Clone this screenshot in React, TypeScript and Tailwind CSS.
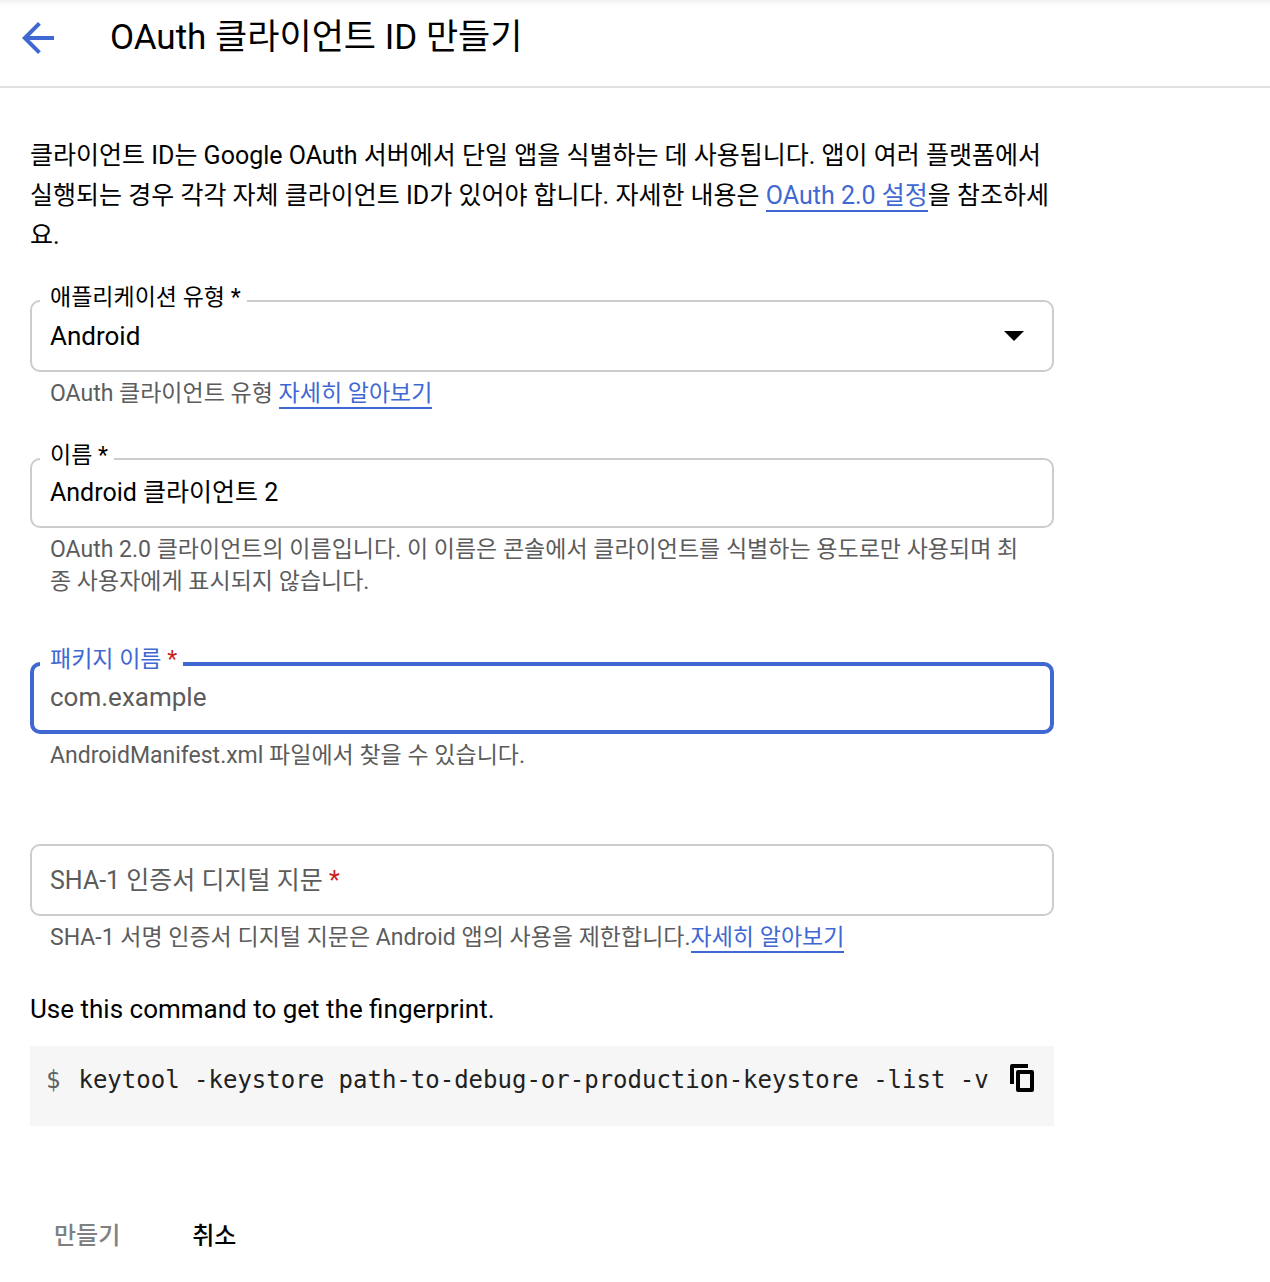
import React, { useState } from 'react';
import { MdArrowBack } from 'react-icons/md';
import clsx from 'clsx';

const COMMAND = 'keytool -keystore path-to-debug-or-production-keystore -list -v';

const TextLink = ({ children }: { children: React.ReactNode }) => (
  <a href="#" className="border-b-2 border-[#3f68d3] text-[#3f68d3]">
    {children}
  </a>
);

type FieldProps = {
  id: string;
  label: string;
  active?: boolean;
  empty?: boolean;
  hint: React.ReactNode;
  className?: string;
  children: React.ReactNode;
};

const Field = ({ id, label, active, empty, hint, className, children }: FieldProps) => (
  <div className={className}>
    <div className="relative">
      {children}
      <label
        htmlFor={id}
        className={clsx(
          'absolute',
          empty
            ? 'left-5 top-[17px] text-[25px] leading-10 text-[#5c5c5c]'
            : 'left-[10px] -top-[14px] bg-white pl-[10px] pr-[6px] text-[23px] leading-6',
          active && 'text-[#3f68d3]'
        )}
      >
        {label} <span className={clsx((active || empty) && 'text-[#c5221f]')}>*</span>
      </label>
    </div>
    <p className="mt-[6px] pl-5 pr-8 text-[23px] leading-8 text-[#5c5c5c]">{hint}</p>
  </div>
);

const box = 'block w-full rounded-[10px] bg-white outline-none';
const idle = 'border-2 border-[#cccccc] px-[18px]';

export default function App() {
  const [type, setType] = useState('android');
  const [name, setName] = useState('Android 클라이언트 2');
  const [packageName, setPackageName] = useState('');
  const [fingerprint, setFingerprint] = useState('');

  return (
    <div
      lang="ko"
      className="bg-white font-[Roboto,'Noto_Sans_CJK_KR',sans-serif] text-[25px] text-black"
    >
      {/* Header */}
      <header className="flex h-[88px] items-center border-b-2 border-[#e0e0e0] bg-linear-to-b from-[#f1f1f1] to-white to-[6px] pb-[10px] pl-[14px]">
        <button type="button" aria-label="뒤로" className="text-[#3f68d3]">
          <MdArrowBack className="size-12" />
        </button>
        <h1 className="ml-12 text-[35px] leading-10">OAuth 클라이언트 ID 만들기</h1>
      </header>

      <form className="mx-[30px] max-w-[1024px] pt-12 pb-[10px]" onSubmit={(e) => e.preventDefault()}>
        <p className="leading-10">
          클라이언트 ID는 Google OAuth 서버에서 단일 앱을 식별하는 데 사용됩니다. 앱이 여러 플랫폼에서
          실행되는 경우 각각 자체 클라이언트 ID가 있어야 합니다. 자세한 내용은{' '}
          <TextLink>OAuth 2.0 설정</TextLink>을 참조하세요.
        </p>

        {/* Application type */}
        <Field
          id="type"
          label="애플리케이션 유형"
          className="mt-11"
          hint={
            <>
              OAuth 클라이언트 유형 <TextLink>자세히 알아보기</TextLink>
            </>
          }
        >
          <select
            id="type"
            value={type}
            onChange={(e) => setType(e.target.value)}
            className={clsx(box, idle, 'h-[72px] appearance-none text-[26px]')}
          >
            <option value="android">Android</option>
          </select>
          <svg
            viewBox="0 0 20 10"
            className="pointer-events-none absolute right-[30px] top-[31px] h-[10px] w-5"
          >
            <path d="M0 0h20L10 10z" />
          </svg>
        </Field>

        {/* Name */}
        <Field
          id="name"
          label="이름"
          className="mt-12"
          hint="OAuth 2.0 클라이언트의 이름입니다. 이 이름은 콘솔에서 클라이언트를 식별하는 용도로만 사용되며 최종 사용자에게 표시되지 않습니다."
        >
          <input
            id="name"
            value={name}
            onChange={(e) => setName(e.target.value)}
            className={clsx(box, idle, 'h-[70px] pb-[6px]')}
          />
        </Field>

        {/* Package name */}
        <Field
          id="package"
          label="패키지 이름"
          active
          className="mt-16"
          hint="AndroidManifest.xml 파일에서 찾을 수 있습니다."
        >
          <input
            id="package"
            value={packageName}
            onChange={(e) => setPackageName(e.target.value)}
            placeholder="com.example"
            className={clsx(
              box,
              'h-[72px] border-4 border-[#3f68d3] px-4 pb-[2px] text-[26px] placeholder:text-[#5c5c5c]'
            )}
          />
        </Field>

        {/* SHA-1 */}
        <Field
          id="sha1"
          label="SHA-1 인증서 디지털 지문"
          empty={!fingerprint}
          className="mt-[72px]"
          hint={
            <>
              SHA-1 서명 인증서 디지털 지문은 Android 앱의 사용을 제한합니다.
              <TextLink>자세히 알아보기</TextLink>
            </>
          }
        >
          <input
            id="sha1"
            value={fingerprint}
            onChange={(e) => setFingerprint(e.target.value)}
            className={clsx(box, idle, 'h-[72px]')}
          />
        </Field>

        <p className="mt-[35px] text-[26px] leading-10">Use this command to get the fingerprint.</p>
        <div className="mt-[17px] flex h-20 items-start justify-between bg-[#f6f6f6] pl-4 pr-5 pt-[18px]">
          <code className="flex gap-[18px] whitespace-nowrap font-['DejaVu_Sans_Mono',monospace] text-[24px] leading-8 text-[#212121]">
            <span className="text-[#616161]">$</span>
            <span>{COMMAND}</span>
          </code>
          <button
            type="button"
            aria-label="복사"
            onClick={() => navigator.clipboard?.writeText(COMMAND)}
          >
            <svg viewBox="0 0 24 28" className="h-7 w-6" fill="none" stroke="currentColor" strokeWidth="4">
              <path d="M2 20V2h16" strokeLinejoin="round" />
              <rect x="8" y="8" width="14" height="18" strokeLinejoin="round" />
            </svg>
          </button>
        </div>

        {/* Actions */}
        <div className="mt-[74px] flex gap-6 text-[24px] font-medium leading-8">
          <button type="submit" disabled className="px-6 py-5 text-[#808080]">
            만들기
          </button>
          <button type="button" className="px-6 py-5">
            취소
          </button>
        </div>
      </form>
    </div>
  );
}
